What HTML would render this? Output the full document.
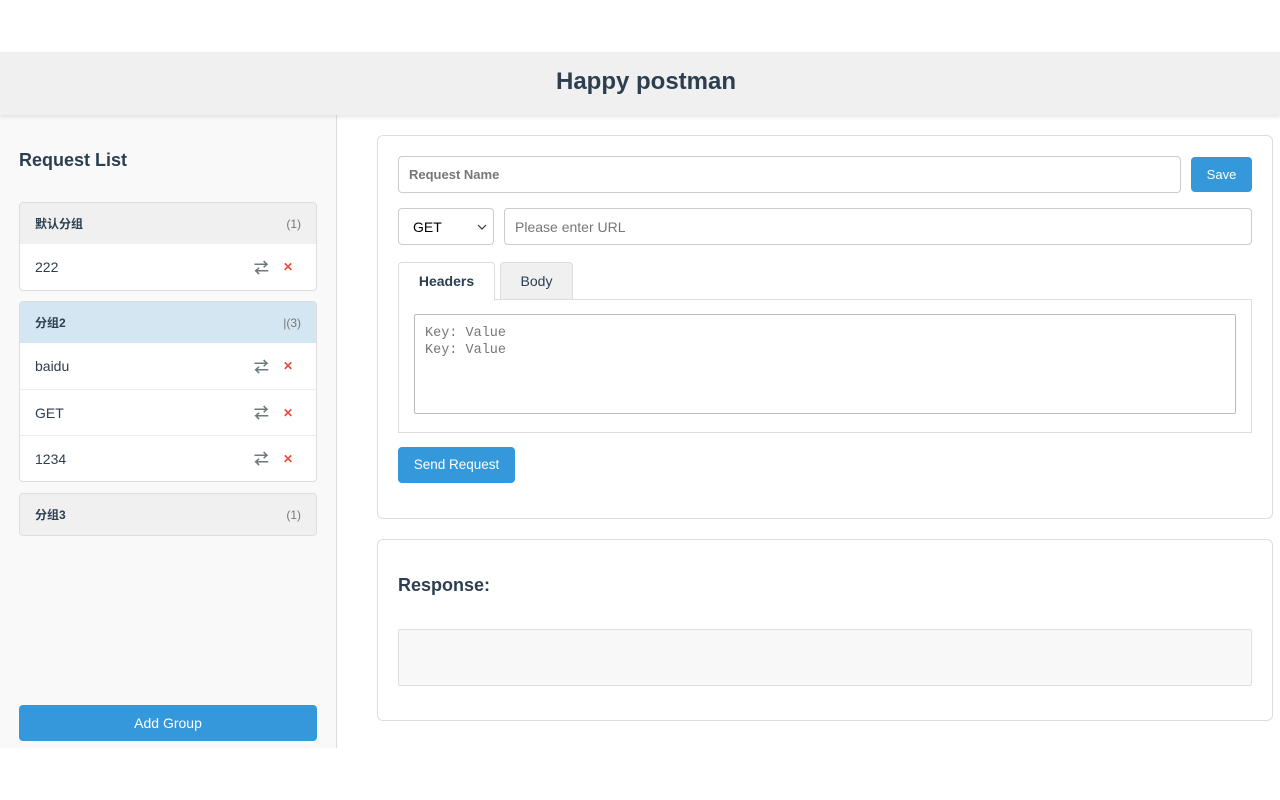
<!DOCTYPE html>
<html><head><meta charset="utf-8"><style>
*{box-sizing:border-box;margin:0;padding:0}
body{width:1280px;height:800px;background:#fff;font-family:"Liberation Sans","Noto Sans CJK SC",sans-serif;color:#2c3e50;position:relative;overflow:hidden}
.hdr{position:absolute;top:52px;left:0;width:1280px;height:63px;background:#f0f0f0;box-shadow:0 2px 4px rgba(0,0,0,.1);text-align:center;font-size:24px;font-weight:bold;line-height:60px;z-index:2;padding-left:12px}
.side{position:absolute;top:115px;left:0;width:337px;height:633px;background:#f9f9f9;border-right:1px solid #ddd}
.side h2{position:absolute;left:19px;top:35px;font-size:18px}
.grp{position:absolute;left:19px;width:298px;border:1px solid #ddd;border-radius:4px;overflow:hidden;background:#fff}
.gh{height:41px;background:#f0f0f0;font-size:12px;font-weight:bold;padding:0 15px;display:flex;align-items:center;justify-content:space-between}
.gh span{font-weight:normal;color:#777}
.gh.act{background:#d4e6f1}
.it{height:46px;display:flex;align-items:center;padding:0 15px;font-size:14px;border-top:1px solid #eee}
.it .n{flex:1}
.sw{color:#6c7a7b;font-size:15px;font-weight:bold;margin-right:14px}
.x{color:#e74c3c;font-size:12px;font-weight:bold;margin-right:8px}
.add{position:absolute;left:19px;top:590px;width:298px;height:36px;background:#3498db;color:#fff;border-radius:4px;text-align:center;line-height:36px;font-size:14px}
.card{position:absolute;left:377px;width:896px;border:1px solid #ddd;border-radius:6px;background:#fff}
.inp{position:absolute;border:1px solid #ccc;border-radius:4px;font-size:14px;display:flex;align-items:center;padding-left:10px;color:#777;background:#fff}
.btn{position:absolute;background:#3498db;color:#fff;border-radius:4px;font-size:14px;text-align:center}
.tab{position:absolute;top:126px;height:38px;border:1px solid #ddd;border-bottom:none;border-radius:4px 4px 0 0;font-size:14px;text-align:center;line-height:36px}
</style></head><body>
<div class="hdr">Happy postman</div>
<div class="side">
<h2>Request List</h2>
<div class="grp" style="top:87px"><div class="gh">默认分组<span>(1)</span></div>
<div class="it" style="border-top:none"><span class="n">222</span><span class="sw">⇄</span><span class="x">✕</span></div></div>
<div class="grp" style="top:186px"><div class="gh act">分组2<span>|(3)</span></div>
<div class="it" style="border-top:none"><span class="n">baidu</span><span class="sw">⇄</span><span class="x">✕</span></div>
<div class="it"><span class="n">GET</span><span class="sw">⇄</span><span class="x">✕</span></div>
<div class="it"><span class="n">1234</span><span class="sw">⇄</span><span class="x">✕</span></div></div>
<div class="grp" style="top:378px"><div class="gh">分组3<span>(1)</span></div></div>
<div class="add">Add Group</div>
</div>
<div class="card" style="top:135px;height:384px">
<div class="inp" style="left:20px;top:20px;width:783px;height:37px;font-weight:bold;font-size:13px">Request Name</div>
<div class="btn" style="left:813px;top:21px;width:61px;height:35px;line-height:35px;font-size:13px">Save</div>
<div class="inp" style="left:20px;top:72px;width:96px;height:37px;color:#000;justify-content:space-between;padding:0 6px 0 14px">GET<svg width="10" height="6" viewBox="0 0 10 6"><path d="M1 1l4 4 4-4" stroke="#333" fill="none" stroke-width="1.2"/></svg></div>
<div class="inp" style="left:126px;top:72px;width:748px;height:37px">Please enter URL</div>
<div class="tab" style="left:20px;width:97px;background:#fff;font-weight:bold;height:39px;z-index:1">Headers</div>
<div class="tab" style="left:122px;width:73px;background:#f0f0f0">Body</div>
<div style="position:absolute;left:20px;top:163px;width:854px;height:134px;border:1px solid #ddd"></div>
<div style="position:absolute;left:36px;top:178px;width:822px;height:100px;border:1px solid #bbb;border-radius:2px;font-family:'Liberation Mono',monospace;font-size:13.5px;color:#777;padding:10px;line-height:17px">Key: Value<br>Key: Value</div>
<div class="btn" style="left:20px;top:311px;width:117px;height:36px;line-height:36px;font-size:13.5px">Send Request</div>
</div>
<div class="card" style="top:539px;height:182px">
<div style="position:absolute;left:20px;top:35px;font-size:18px;font-weight:bold">Response:</div>
<div style="position:absolute;left:20px;top:89px;width:854px;height:57px;background:#f8f8f8;border:1px solid #e0e0e0;border-radius:2px"></div>
</div>
</body></html>
